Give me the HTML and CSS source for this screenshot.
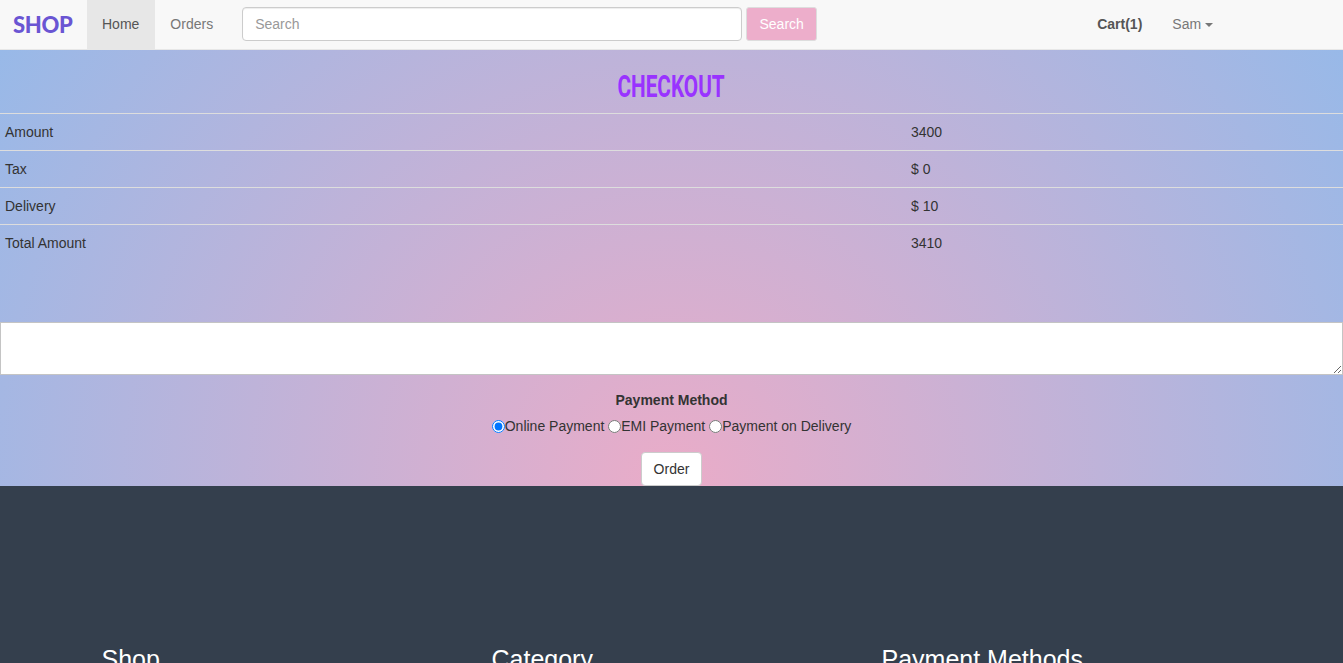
FILE: index.html
```html
<!DOCTYPE html>
<html lang="en">
<head>
<meta charset="utf-8">
<title>Checkout</title>
<link rel="stylesheet" href="styles.css">
</head>
<body>
<nav class="navbar">
  <a class="brand" href="#">SHOP</a>
  <ul class="nav">
    <li class="active"><a href="#">Home</a></li>
    <li><a href="#">Orders</a></li>
  </ul>
  <form class="search">
    <input type="text" class="search-input" placeholder="Search">
    <button type="button" class="search-btn">Search</button>
  </form>
  <ul class="nav nav-right">
    <li><a href="#" class="cart">Cart(1)</a></li>
    <li><a href="#">Sam <span class="caret"></span></a></li>
  </ul>
</nav>

<main class="checkout">
  <h1 class="title"><span>CHECKOUT</span></h1>
  <table class="summary">
    <tr><td class="label">Amount</td><td>3400</td></tr>
    <tr><td class="label">Tax</td><td>$ 0</td></tr>
    <tr><td class="label">Delivery</td><td>$ 10</td></tr>
    <tr><td class="label">Total Amount</td><td>3410</td></tr>
  </table>
  <textarea class="address"></textarea>
  <div class="payment">
    <label class="pay-label">Payment Method</label>
    <div class="pay-options"><input type="radio" name="pay" checked>Online Payment <input type="radio" name="pay">EMI Payment <input type="radio" name="pay">Payment on Delivery</div>
    <button type="button" class="order-btn">Order</button>
  </div>
</main>

<footer class="footer">
  <div class="footer-row">
    <div class="footer-col"><h3>Shop</h3></div>
    <div class="footer-col"><h3>Category</h3></div>
    <div class="footer-col"><h3>Payment Methods</h3></div>
  </div>
</footer>
</body>
</html>
```

FILE: styles.css
```css
* { box-sizing: border-box; }
html, body { margin: 0; padding: 0; }
body {
  font-family: "Liberation Sans", Arial, sans-serif;
  font-size: 14px;
  line-height: 20px;
  color: #333;
  background: #fff;
}
a { text-decoration: none; }

.navbar {
  display: flex;
  align-items: stretch;
  height: 50px;
  background: #f8f8f8;
  border-bottom: 1px solid #e7e7e7;
}
.brand {
  display: flex;
  align-items: center;
  width: 87px;
  padding: 0 0 0 13px;
  font-family: Lato, "DejaVu Sans", sans-serif;
  font-weight: 900;
  font-size: 22px;
  letter-spacing: -0.3px;
  color: #6a55d3;
}
.nav {
  display: flex;
  list-style: none;
  margin: 0;
  padding: 0;
}
.nav li a {
  display: block;
  padding: 15px 16px 15px 15px;
  line-height: 19px;
  color: #777;
}
.nav li.active a {
  background: #e7e7e7;
  color: #555;
}
.search {
  display: flex;
  align-items: flex-start;
  margin: 7px 0 0 13px;
  gap: 4px;
}
.search-input {
  width: 500px;
  height: 34px;
  padding: 6px 12px;
  border: 1px solid #ccc;
  border-radius: 4px;
  font-family: inherit;
  font-size: 14px;
  color: #555;
  background: #fff;
  box-shadow: inset 0 1px 1px rgba(0,0,0,.075);
}
.search-input::placeholder { color: #999; }
.search-btn {
  width: 71px;
  height: 34px;
  border: 1px solid #ddd;
  border-radius: 3px;
  background: #edaecb;
  color: #fff;
  font-family: inherit;
  font-size: 14px;
}
.nav-right {
  margin-left: auto;
  margin-right: 115px;
}
.nav-right li a { padding: 15px; }
.nav-right .cart {
  font-weight: bold;
  color: #555;
}
.caret {
  display: inline-block;
  width: 0;
  height: 0;
  vertical-align: middle;
  border-top: 4px solid #777;
  border-left: 4px solid transparent;
  border-right: 4px solid transparent;
}

.checkout {
  background: radial-gradient(circle farthest-corner at 50% 100%, #eaacc8 0%, #98b9e8 100%);
}
.title {
  display: flex;
  align-items: center;
  justify-content: center;
  height: 63px;
  margin: 0;
  padding-top: 9px;
  font-size: 31px;
  font-weight: bold;
  line-height: 1;
}
.title span {
  display: inline-block;
  font-family: Roboto, "Liberation Sans", sans-serif;
  font-weight: 700;
  color: #9933ff;
  transform: scaleX(0.67);
}
.summary {
  width: 100%;
  border-collapse: collapse;
  margin-bottom: 61px;
}
.summary td {
  border-top: 1px solid #ddd;
  padding: 8px 5px;
  line-height: 20px;
  vertical-align: top;
}
.summary td.label { width: 906px; }
.address {
  display: block;
  width: 100%;
  height: 53px;
  margin: 0;
  border: 1px solid #c4c4c4;
  background: #fff;
  resize: vertical;
}
.payment {
  padding-top: 15px;
  text-align: center;
}
.pay-label {
  display: inline-block;
  font-weight: bold;
  margin-bottom: 6px;
}
.pay-options input {
  width: 13px;
  height: 13px;
  margin: 0;
  vertical-align: -2px;
}
.order-btn {
  display: inline-block;
  margin-top: 16px;
  height: 34px;
  padding: 6px 12px;
  border: 1px solid #ccc;
  border-radius: 4px;
  background: #fff;
  color: #333;
  font-family: inherit;
  font-size: 14px;
  line-height: 20px;
  vertical-align: top;
}

.footer {
  background: #343f4d;
  padding: 140px 0 60px;
  color: #fff;
}
.footer-row {
  display: flex;
  width: 1170px;
  margin: 0 auto;
}
.footer-col {
  width: 390px;
  padding: 0 15px;
}
.footer-col h3 {
  margin: 20px 0 10px;
  font-size: 25px;
  font-weight: 500;
  line-height: 26px;
  color: #fff;
}
```
